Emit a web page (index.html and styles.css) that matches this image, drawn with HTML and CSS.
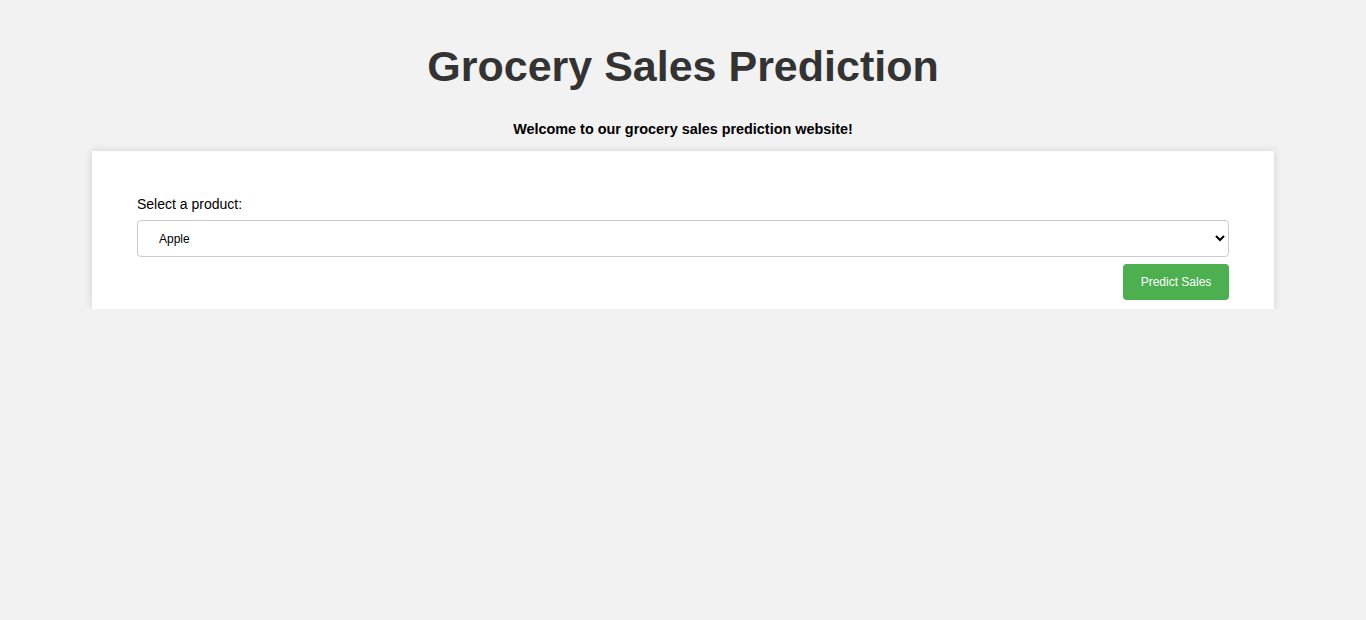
FILE: index.html
```html
<!DOCTYPE html>
<html lang="en">
<head>
<meta charset="utf-8">
<title>Grocery Sales Prediction</title>
<link rel="stylesheet" href="styles.css">
</head>
<body>
  <header class="header">
    <h1 class="title">Grocery Sales Prediction</h1>
    <p class="subtitle">Welcome to our grocery sales prediction website!</p>
  </header>
  <main class="card">
    <form class="form">
      <label class="label" for="product">Select a product:</label>
      <select class="select" id="product">
        <option>Apple</option>
        <option>Banana</option>
        <option>Orange</option>
        <option>Milk</option>
        <option>Bread</option>
      </select>
      <div class="actions">
        <button type="button" class="btn">Predict Sales</button>
      </div>
    </form>
  </main>
</body>
</html>
```

FILE: styles.css
```css
html, body {
  margin: 0;
  padding: 0;
}
body {
  background: #f2f2f2;
  font-family: "Liberation Sans", Arial, sans-serif;
  color: #000;
}
.header {
  text-align: center;
  padding-top: 40px;
}
.title {
  margin: 0;
  font-size: 43px;
  font-weight: bold;
  color: #333;
  line-height: 52px;
}
.subtitle {
  margin: 28px 0 0;
  font-size: 14.4px;
  font-weight: bold;
  line-height: 18px;
}
.card {
  width: 1182px;
  margin: 13px auto 0;
  background: #fff;
  box-shadow: 0 0 8px rgba(0, 0, 0, 0.15);
  padding: 44px 45px 9px;
  box-sizing: border-box;
}
.form {
  display: flex;
  flex-direction: column;
}
.label {
  font-size: 14px;
  line-height: 18px;
  margin-bottom: 7px;
}
.select {
  height: 37px;
  border: 1px solid #ccc;
  border-radius: 4px;
  background: #fff;
  font-family: "Liberation Sans", Arial, sans-serif;
  font-size: 12px;
  padding: 0 8px 0 17px;
  color: #000;
}
.actions {
  display: flex;
  justify-content: flex-end;
  margin-top: 7px;
}
.btn {
  width: 106px;
  height: 36px;
  background: #4caf50;
  color: #fff;
  border: none;
  border-radius: 4px;
  font-family: "Liberation Sans", Arial, sans-serif;
  font-size: 12px;
  cursor: pointer;
}
```
